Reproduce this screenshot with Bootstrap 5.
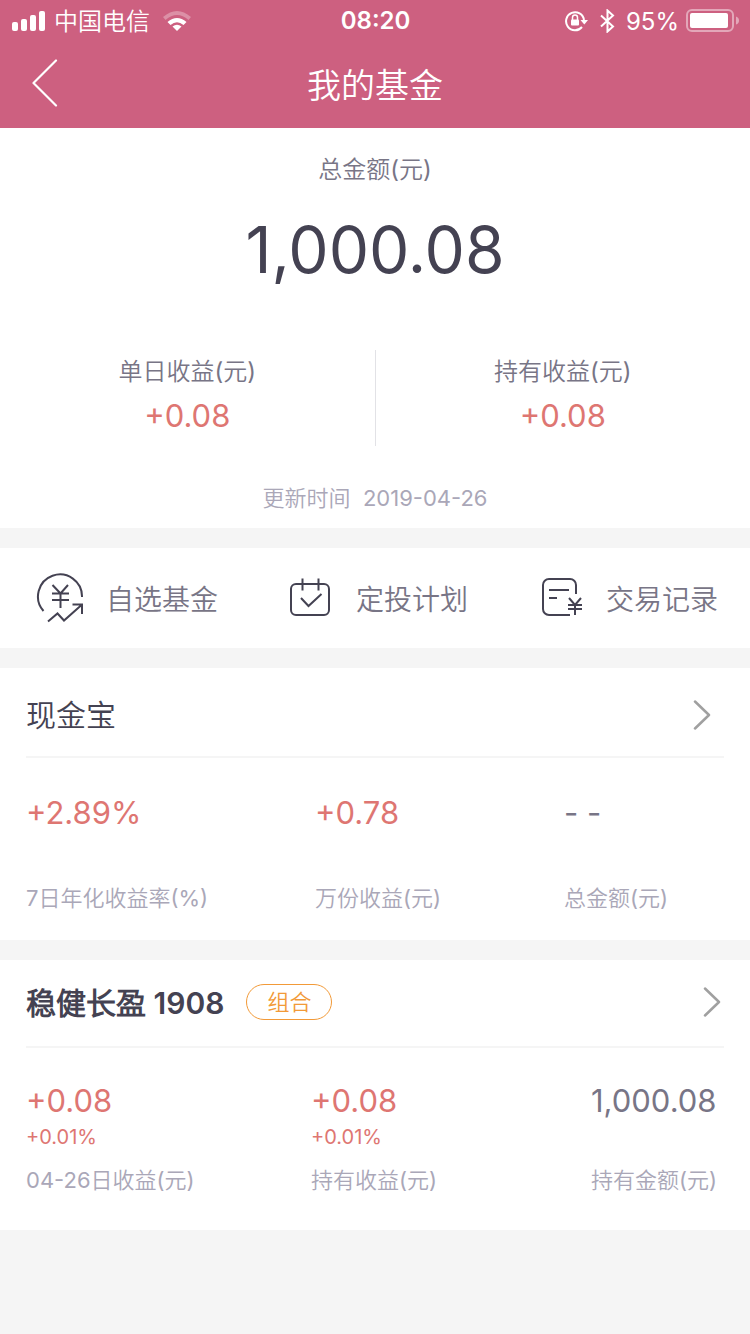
<!DOCTYPE html>
<html lang="zh-CN">
<head>
<meta charset="utf-8">
<meta name="viewport" content="width=device-width, initial-scale=1">
<title>我的基金</title>
<link href="https://cdn.jsdelivr.net/npm/bootstrap@5.3.0/dist/css/bootstrap.min.css" rel="stylesheet">
<style>
  :root { --ink: #444252; --text: #787586; --soft: #aaa7b8; --rise: #de7672; --brand: #cd6080; --tag: #f29a38; }
  body { font-family: Inter, "Noto Sans CJK SC DemiLight", "Noto Sans CJK SC Light", "Noto Sans CJK SC", sans-serif; background: #f5f5f5; color: var(--text); font-size: 24px; line-height: 32px; }
  svg { display: block; flex: none; }
  h1, h2 { margin: 0; }
  .app-head { background: var(--brand); color: #fff; }
  .status-bar { height: 40px; padding: 1px 11px 0 12px; }
  .status-side { flex: 1 1 0; }
  .status-side span { padding-top: 2px; }
  .status-time { font-size: 24px; font-weight: 600; }
  .status-icons { gap: 11px; }
  .charge { gap: 7px; }
  .title-bar { display: grid; grid-template-columns: 88px 1fr 88px; align-items: center; height: 88px; }
  .title-bar h1 { font-size: 34px; line-height: 48px; font-weight: 400; padding-top: 4px; }
  .back-btn { background: none; border: 0; color: inherit; padding: 0 0 2px 32px; height: 88px; }
  .panel { background: #fff; margin-bottom: 20px; }
  .summary { padding: 26px 0 14px; }
  .total { font-size: 64px; line-height: 80px; color: var(--ink); margin: 24px 0 60px; }
  .gain { height: 96px; padding-top: 6px; }
  .gain + .gain { border-left: 1px solid #e2e2e6; }
  .figure-value { font-size: 31px; line-height: 40px; }
  .gain .figure-value { margin-top: 8px; }
  .rise { color: var(--rise); }
  .updated { font-size: 22px; color: var(--soft); margin-top: 36px; }
  .quick a { color: var(--text); font-size: 28px; height: 100px; padding-left: 36px; gap: 20px; }
  .quick span { padding-top: 3px; }
  .fund { padding: 0 26px; }
  .fund-head { color: var(--ink); border-bottom: 2px solid #f5f5f5; height: 90px; padding: 5px 13px 0 0; font-size: 30px; }
  .fund-head h2 { font-size: 30px; line-height: 40px; font-weight: 400; }
  .figure-label { font-size: 22px; color: var(--soft); }
  .cash-grid { display: grid; grid-template-columns: 289fr 249fr 160fr; padding: 35px 0 26px; }
  .cash-grid .figure-label { margin-top: 49px; }
  .combo-head { height: 88px; padding: 0 3px 2px 0; }
  .combo-head h2 { font-weight: 600; padding-top: 2px; }
  .combo-tag { border: 1px solid var(--tag); color: var(--tag); border-radius: 18px; font-size: 22px; line-height: 34px; padding: 0 20px; margin-left: 22px; }
  .combo-grid { display: grid; grid-template-columns: 285fr 280fr 133fr; padding: 33px 0 34px; }
  .figure-rate { font-size: 20px; line-height: 32px; min-height: 32px; }
  .combo-grid .figure-label { margin-top: 11px; }
</style>
</head>
<body>
<header class="app-head">
  <div class="status-bar d-flex align-items-center">
    <div class="status-side d-flex align-items-center">
      <svg width="34" height="20" fill="#fff" aria-hidden="true"><rect y="11" width="6" height="9" rx="2"/><rect x="9" y="8" width="6" height="12" rx="2"/><rect x="18" y="4" width="6" height="16" rx="2"/><rect x="27" width="6" height="20" rx="2"/></svg>
      <span class="ms-2">中国电信</span>
      <svg class="ms-2 me-auto" width="40" height="20" viewBox="-5 0 40 20" fill="none" aria-hidden="true"><path d="M0 6Q14-6 28 6L25.500 9Q14-1 2.500 9z" fill="#fff" opacity=".3"/><path d="M4.500 11Q14 3 23.500 11L20.500 14Q14 8.500 7.500 14z" fill="#fff"/><path d="M14 20l-4.500-4.500q4.500-3.500 9 0z" fill="#fff"/></svg>
    </div>
    <div class="status-time">08:20</div>
    <div class="status-side status-icons d-flex align-items-center justify-content-end">
      <svg width="24" height="22" viewBox="0 0 24 22" fill="none" stroke="#fff" stroke-width="2" aria-hidden="true"><path d="M19 10A9 9 0 1 0 17 17"/><path d="M15.500 10h7.500l-3.700 4.500z" fill="#fff" stroke="none"/><rect x="6" y="9.500" width="8" height="6" rx="1" fill="#fff" stroke="none"/><path d="M7.500 10V7.500a2.500 2.500 0 0 1 5 0V10" stroke-width="1.500"/></svg>
      <svg width="15" height="24" viewBox="0 0 15 24" fill="none" stroke="#fff" stroke-width="2" aria-hidden="true"><path d="M1 6.500L13 17.500 7.500 22.500V1.500L13 6.500 1 17.500"/></svg>
      <div class="charge d-flex align-items-center">
        <span>95%</span>
        <svg width="53" height="24" viewBox="0 0 53 24" aria-hidden="true"><rect x="1" y="1" width="46" height="21" rx="5" fill="none" stroke="#fff" stroke-width="2" opacity=".45"/><rect x="4" y="4" width="38" height="15" rx="2" fill="#fff"/><path d="M50 7.500q3 1 3 4t-3 4z" fill="#fff" opacity=".45"/></svg>
      </div>
    </div>
  </div>
  <div class="title-bar">
    <button class="back-btn" type="button" aria-label="返回"><svg width="26" height="48" viewBox="0 0 26 48" fill="none" stroke="#fff" stroke-width="2.200" stroke-linecap="round" stroke-linejoin="round"><path d="M24 1.500L1.500 24 24 46.500"/></svg></button>
    <h1 class="text-center">我的基金</h1>
  </div>
</header>

<main>
  <section class="panel summary text-center">
    <div>总金额(元)</div>
    <div class="total">1,000.08</div>
    <div class="row g-0">
      <div class="col gain"><div>单日收益(元)</div><div class="figure-value rise">+0.08</div></div>
      <div class="col gain"><div>持有收益(元)</div><div class="figure-value rise">+0.08</div></div>
    </div>
    <div class="updated">更新时间&nbsp; 2019-04-26</div>
  </section>

  <nav class="panel quick row g-0">
    <a href="#" class="col d-flex align-items-center text-decoration-none text-nowrap">
      <svg width="50" height="50" viewBox="0 0 50 50" fill="none" stroke="#444252" stroke-width="2"><path d="M7.500 38A22 22 0 1 1 46 24"/><path d="M16.500 12l8 8.500L32 12M16 20.500h17M16 27h17M24.500 20.500V35"/><path d="M12 48.500L21.500 40.500 28 47.500 45.500 32M36.500 31.500H46V41"/></svg>
      <span>自选基金</span>
    </a>
    <a href="#" class="col d-flex align-items-center text-decoration-none text-nowrap">
      <svg width="50" height="50" viewBox="0 0 50 50" fill="none" stroke="#444252" stroke-width="2"><rect x="5" y="11" width="38" height="31" rx="5"/><path d="M16.500 5.500v12M32.500 5.500v12M15 25l7.500 8L35.500 21"/></svg>
      <span>定投计划</span>
    </a>
    <a href="#" class="col d-flex align-items-center text-decoration-none text-nowrap">
      <svg width="50" height="50" viewBox="0 0 50 50" fill="none" stroke="#444252" stroke-width="2"><path d="M40 21V12a6 6 0 0 0-6-6H13a6 6 0 0 0-6 6v24a6 6 0 0 0 6 6h21M13 17h20M13 25h8"/><path d="M33 25l6 7 6-7M32 32h14M32 36h14M39 32v10"/></svg>
      <span>交易记录</span>
    </a>
  </nav>

  <section class="panel fund">
    <a href="#" class="fund-head d-flex align-items-center justify-content-between text-decoration-none">
      <h2>现金宝</h2>
      <svg width="18" height="30" viewBox="0 0 18 30" fill="none" stroke="#a0a0a0" stroke-width="2.500" stroke-linecap="round" stroke-linejoin="round"><path d="M2 1.500L16 15 2 28.500"/></svg>
    </a>
    <div class="cash-grid text-nowrap">
      <div><div class="figure-value rise">+2.89%</div><div class="figure-label">7日年化收益率(%)</div></div>
      <div><div class="figure-value rise">+0.78</div><div class="figure-label">万份收益(元)</div></div>
      <div><div class="figure-value">- -</div><div class="figure-label">总金额(元)</div></div>
    </div>
  </section>

  <section class="panel fund mb-0">
    <a href="#" class="fund-head combo-head d-flex align-items-center text-decoration-none">
      <h2>稳健长盈 1908</h2>
      <span class="combo-tag">组合</span>
      <svg class="ms-auto" width="18" height="30" viewBox="0 0 18 30" fill="none" stroke="#a0a0a0" stroke-width="2.500" stroke-linecap="round" stroke-linejoin="round"><path d="M2 1.500L16 15 2 28.500"/></svg>
    </a>
    <div class="combo-grid text-nowrap">
      <div><div class="figure-value rise">+0.08</div><div class="figure-rate rise">+0.01%</div><div class="figure-label">04-26日收益(元)</div></div>
      <div><div class="figure-value rise">+0.08</div><div class="figure-rate rise">+0.01%</div><div class="figure-label">持有收益(元)</div></div>
      <div><div class="figure-value">1,000.08</div><div class="figure-rate"></div><div class="figure-label">持有金额(元)</div></div>
    </div>
  </section>
</main>
<script src="https://cdn.jsdelivr.net/npm/bootstrap@5.3.0/dist/js/bootstrap.bundle.min.js"></script>
</body>
</html>
